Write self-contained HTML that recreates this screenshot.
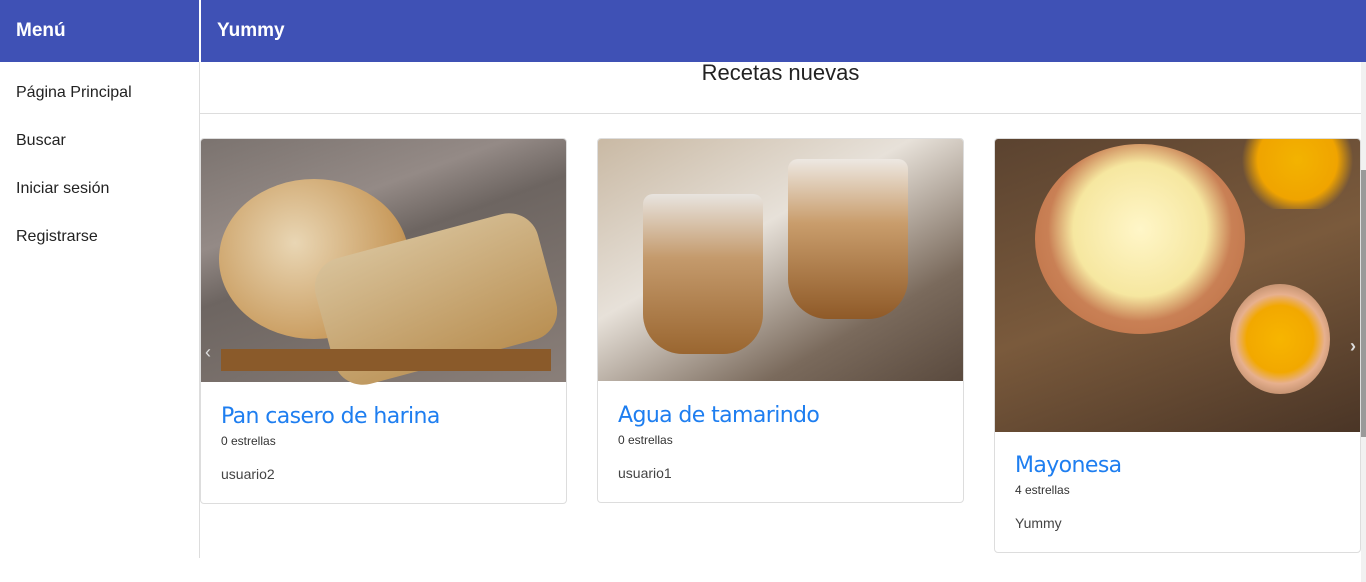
<!DOCTYPE html>
<html><head><meta charset="utf-8"><style>
*{margin:0;padding:0;box-sizing:border-box}
body{width:1366px;height:582px;overflow:hidden;background:#fff;font-family:"Liberation Sans",sans-serif;position:relative}
.hdr{position:absolute;top:0;height:62px;background:#3f51b5;color:#fff;font-weight:bold;font-size:19px;line-height:62px}
.side{position:absolute;left:0;top:62px;width:200px;height:496px;border-right:1px solid #ddd}
.side div{position:absolute;left:16px;font-size:16px;color:#222}
.title{position:absolute;left:200px;width:1161px;top:60px;text-align:center;font-size:22px;color:#222}
.line{position:absolute;left:200px;right:0;top:113px;border-top:1px solid #ddd}
.card{position:absolute;width:367px;border:1px solid #ddd;border-radius:4px;overflow:hidden;background:#fff}
.img{width:100%}
.card h2{position:absolute;left:20px;font-size:22px;font-weight:normal;color:#1e7ef0;font-family:"DejaVu Sans",sans-serif;letter-spacing:-0.6px}
.card .s{position:absolute;left:20px;font-size:12px;color:#333}
.card .u{position:absolute;left:20px;font-size:14px;color:#444}
.sb{position:absolute;right:0;top:62px;width:5px;height:520px;background:#f1f1f1}
.sb i{position:absolute;top:108px;height:267px;width:5px;background:#999}
</style></head><body>
<div class="hdr" style="left:0;width:199px;padding-left:16px">Menú</div>
<div class="hdr" style="left:200px;right:0;padding-left:16px;border-left:1px solid #fff">Yummy</div>
<div class="side">
<div style="top:22px">Página Principal</div>
<div style="top:70px">Buscar</div>
<div style="top:118px">Iniciar sesión</div>
<div style="top:166px">Registrarse</div>
</div>
<div class="title">Recetas nuevas</div>
<div class="line"></div>
<div class="card" style="left:200px;top:138px;height:366px">
<div class="img" style="height:243px;background:linear-gradient(160deg,#7b736f 0%,#948a86 30%,#6d6561 45%,#8a7f79 100%);position:relative">
<div style="position:absolute;left:18px;top:40px;width:190px;height:160px;border-radius:50%;background:radial-gradient(circle at 40% 40%,#e9d6b4,#c89a5c 70%,#8a6030)"></div>
<div style="position:absolute;left:120px;top:95px;width:230px;height:130px;background:linear-gradient(170deg,#d8c29a,#b98f52);border-radius:30px;transform:rotate(-15deg)"></div>
<div style="position:absolute;left:20px;top:210px;width:330px;height:22px;background:#8a5a2a"></div>
<div style="position:absolute;left:4px;top:203px;color:#ddd;font-size:18px">‹</div>
</div>
<h2 style="top:265px">Pan casero de harina</h2>
<div class="s" style="top:295px">0 estrellas</div>
<div class="u" style="top:327px">usuario2</div>
</div>
<div class="card" style="left:597px;top:138px;height:365px">
<div class="img" style="height:242px;background:linear-gradient(150deg,#c9b9a4 0%,#e7e1d9 40%,#7a6a5c 75%,#5a4a3e 100%);position:relative">
<div style="position:absolute;left:45px;top:55px;width:120px;height:160px;border-radius:10px 10px 40px 40px;background:linear-gradient(#e8e4df 0%,#c49a6c 40%,#9a6630 100%)"></div>
<div style="position:absolute;left:190px;top:20px;width:120px;height:160px;border-radius:10px 10px 40px 40px;background:linear-gradient(#ede8e2 0%,#c99d6c 40%,#8f5a28 100%)"></div>
</div>
<h2 style="top:264px">Agua de tamarindo</h2>
<div class="s" style="top:294px">0 estrellas</div>
<div class="u" style="top:326px">usuario1</div>
</div>
<div class="card" style="left:994px;top:138px;height:415px">
<div class="img" style="height:293px;background:linear-gradient(160deg,#5b4330 0%,#7a5a3c 50%,#4a3526 100%);position:relative">
<div style="position:absolute;left:40px;top:5px;width:210px;height:190px;border-radius:50%;background:radial-gradient(circle at 50% 45%,#fff6c8 0%,#f6e7a0 45%,#c98055 62%,#b76a40 100%)"></div>
<div style="position:absolute;left:235px;top:145px;width:100px;height:110px;border-radius:50%;background:radial-gradient(circle,#f7b500 0%,#f2a800 45%,#e7b08e 60%,#8a6040 100%)"></div>
<div style="position:absolute;left:240px;top:0;width:125px;height:70px;background:radial-gradient(circle at 50% 30%,#f3b300,#f0a400 50%,transparent 70%)"></div>
<div style="position:absolute;right:4px;top:197px;color:#ddd;font-size:18px;font-weight:bold">›</div>
</div>
<h2 style="top:314px">Mayonesa</h2>
<div class="s" style="top:344px">4 estrellas</div>
<div class="u" style="top:376px">Yummy</div>
</div>
<div class="sb"><i></i></div>
</body></html>
